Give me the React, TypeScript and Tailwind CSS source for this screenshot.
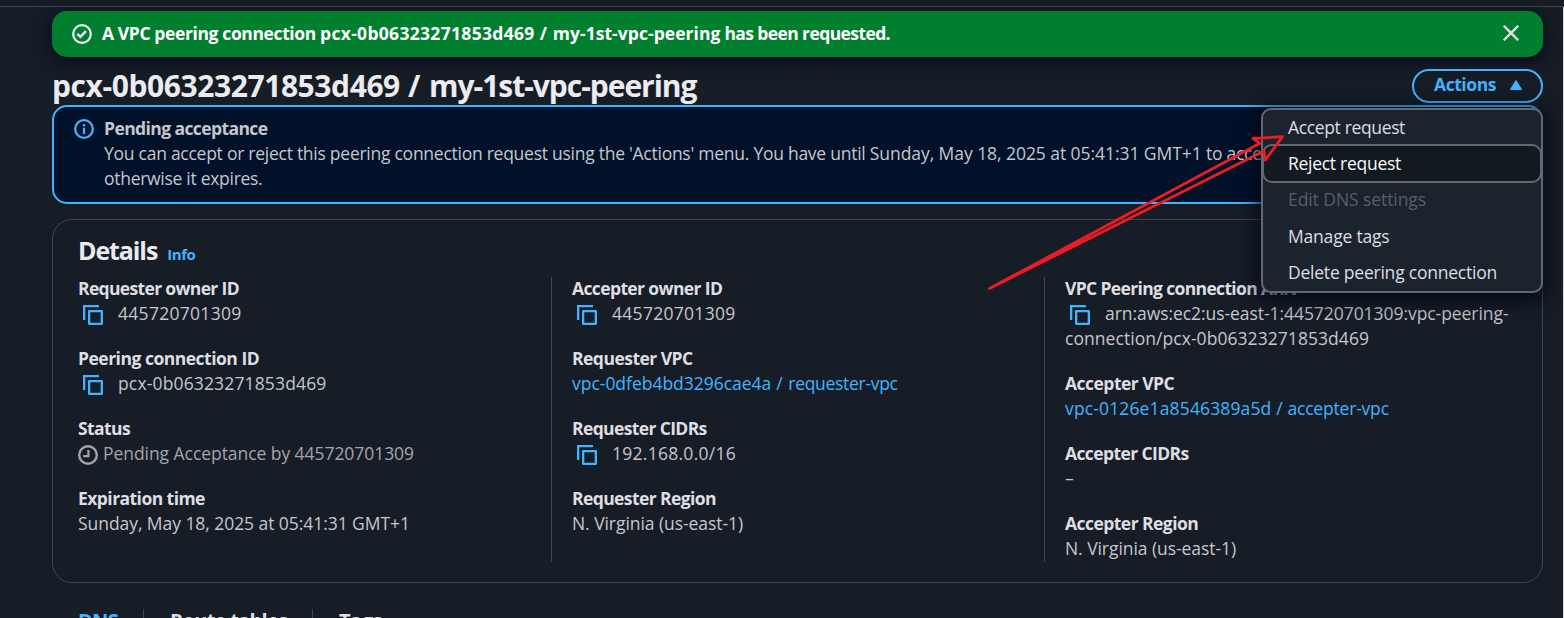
import type { ReactNode } from "react";

function CopyButton() {
  return (
    <span className="ml-[5px] mr-[15px] inline-flex h-5 w-5 align-[-5px]">
      <svg viewBox="0 0 20 20" className="h-5 w-5" fill="none" stroke="#42b4ff" strokeWidth="2.3">
        <path d="M16 1.15H1.15V15" />
        <rect x="6.15" y="6.15" width="12.7" height="12.7" strokeLinejoin="round" />
      </svg>
    </span>
  );
}

function CheckCircle() {
  return (
    <svg viewBox="0 0 20 20" className="h-5 w-5 shrink-0" fill="none" stroke="#f3f3f7" strokeWidth="2.2">
      <circle cx="10" cy="10" r="8.8" />
      <path d="M5.4 9.9 8.4 12.9 13.9 7.2" strokeWidth="2.4" />
    </svg>
  );
}

function InfoCircle() {
  return (
    <svg viewBox="0 0 20 20" className="h-5 w-5 shrink-0" fill="none" stroke="#42b4ff" strokeWidth="2.3">
      <circle cx="10" cy="10" r="8.8" />
      <path d="M10 5v2.4M10 8.7v6.2" />
    </svg>
  );
}

function PendingClock() {
  return (
    <svg viewBox="0 0 20 20" className="mt-0.5 h-5 w-5 shrink-0" fill="none" stroke="#a4a4ad" strokeWidth="2.4">
      <circle cx="10" cy="10" r="8.8" />
      <path d="M10.4 5v6.1H5.2" strokeWidth="2.2" />
    </svg>
  );
}

function Field({ label, track, children }: { label: ReactNode; track: string; children: ReactNode }) {
  return (
    <div>
      <div className={`whitespace-nowrap font-bold text-[#dedee3] ${track}`}>{label}</div>
      <div className="whitespace-nowrap">{children}</div>
    </div>
  );
}

function DividedColumn({ children }: { children: ReactNode }) {
  return (
    <div className="-ml-5 border-l border-[#424650] pl-5">
      <div className="-mt-px flex flex-col gap-5">{children}</div>
    </div>
  );
}

function MenuItem({ children, className }: { children: ReactNode; className: string }) {
  return <div className={`flex items-center whitespace-nowrap pb-px pl-[25px] ${className}`}>{children}</div>;
}

export default function App() {
  return (
    <div className="relative h-[618px] w-[1564px] overflow-hidden bg-[#161d26] font-['Open_Sans',sans-serif] text-[17.5px] leading-[25px] text-[#c6c6cd]">
      <div className="h-[7px] border-b border-[#424650]" />
      <main className="h-[611px] border-r border-[#dedee3] pl-[52px] pr-5 pt-1">
        <div className="flex h-[46px] items-center rounded-[15px] bg-[#00802f] pl-5 pr-6 font-bold text-white shadow-[0_4px_16px_2px_rgba(0,7,22,0.6)]">
          <CheckCircle />
          <p className="ml-[10px] grow whitespace-nowrap pb-px">
            <span className="tracking-[-0.385px]">A VPC peering connection </span>
            <span className="tracking-[0.31px]">pcx-0b06323271853d469</span>
            <span className="tracking-[0.6px]"> / </span>
            <span className="tracking-[0.05px]">my-1st-vpc-peering</span>
            <span className="tracking-[-0.6px]"> has been requested.</span>
          </p>
          <svg viewBox="0 0 16 16" className="mb-0.5 h-4 w-4" stroke="#dedee3" strokeWidth="2.4">
            <path d="M.8.8 15.2 15.2M15.2.8.8 15.2" />
          </svg>
        </div>

        <header className="relative z-10 flex h-12 items-start justify-between pt-3">
          <h1 className="whitespace-nowrap text-[30px] font-bold leading-[34px] text-[#ebebf0]">
            <span className="tracking-[-0.42px]">pcx-0b06323271853d469</span>
            <span className="tracking-[0.4px]"> / </span>
            <span className="tracking-[-1.03px]">my-1st-vpc-peering</span>
          </h1>
          <button className="flex h-[34px] w-[131px] items-center rounded-full border-2 border-[#42b4ff] pb-[3px] pl-5 font-bold leading-[27px] tracking-[-0.435px] text-[#42b4ff]">
            Actions
            <svg viewBox="0 0 14 12" className="ml-[13px] h-3 w-3.5" fill="#42b4ff" stroke="#42b4ff" strokeLinejoin="round">
              <path d="M7 1.5 12.6 10.5H1.4Z" />
            </svg>
          </button>
          <div className="absolute right-0 top-[51px] h-[185px] w-[282px] rounded-[10px] border-2 border-[#656871] bg-[#1b232d] text-[#dedee3] shadow-[0_4px_20px_3px_rgba(0,7,22,0.9)]">
            <MenuItem className="h-[35px] tracking-[-0.355px]">Accept request</MenuItem>
            <div className="-mx-px -mt-px flex h-[39px] items-center whitespace-nowrap rounded-[10px] border-2 border-[#656871] bg-[#131920] pb-px pl-6 tracking-[-0.276px] text-[#f9f9fa]">
              Reject request
            </div>
            <MenuItem className="-mt-px h-[36.5px] tracking-[-0.075px] text-[#5b5e68]">Edit DNS settings</MenuItem>
            <MenuItem className="h-[36.5px] tracking-[-0.191px]">Manage tags</MenuItem>
            <MenuItem className="h-[36.5px] tracking-[-0.224px]">Delete peering connection</MenuItem>
          </div>
        </header>

        <section className="flex h-[99px] rounded-[15px] border-2 border-[#42b4ff] bg-[#001129] pl-5 pt-[9px]">
          <div className="pt-[3px]">
            <InfoCircle />
          </div>
          <div className="ml-[10px] whitespace-nowrap">
            <div className="font-bold tracking-[-0.592px]">Pending acceptance</div>
            <div className="tracking-[-0.26px]">
              You can accept or reject this peering connection request using the 'Actions' menu. You have until{" "}
              <span className="tracking-[-0.06px]">Sunday, May 18, 2025 at 05:41:31 GMT+1</span> to accept it,
            </div>
            <div className="tracking-[-0.285px]">otherwise it expires.</div>
          </div>
        </section>

        <section className="mt-[15px] h-[364px] rounded-[20px] border border-[#424650] px-[25px] pt-3">
          <div className="flex items-baseline whitespace-nowrap">
            <h2 className="text-[25px] font-bold leading-[36px] tracking-[-1.1px] text-[#ebebf0]">Details</h2>
            <a className="ml-[10px] text-[15px] font-bold tracking-[-0.45px] text-[#42b4ff]">Info</a>
          </div>
          <div className="mt-[9px] grid h-[285px] grid-cols-3 gap-x-10">
            <div className="-mt-px flex flex-col gap-5">
              <Field label="Requester owner ID" track="tracking-[-0.66px]">
                <CopyButton />
                <span className="tracking-[0.286px]">445720701309</span>
              </Field>
              <Field label="Peering connection ID" track="tracking-[-0.5px]">
                <CopyButton />
                <span className="tracking-[0.148px]">pcx-0b06323271853d469</span>
              </Field>
              <Field label="Status" track="tracking-[-0.6px]">
                <span className="flex items-center gap-[5px] tracking-[-0.056px] text-[#a4a4ad]">
                  <PendingClock />
                  Pending Acceptance by 445720701309
                </span>
              </Field>
              <Field label="Expiration time" track="tracking-[-0.55px]">
                <span className="tracking-[-0.06px]">Sunday, May 18, 2025 at 05:41:31 GMT+1</span>
              </Field>
            </div>
            <DividedColumn>
              <Field label="Accepter owner ID" track="tracking-[-0.62px]">
                <CopyButton />
                <span className="tracking-[0.286px]">445720701309</span>
              </Field>
              <Field label="Requester VPC" track="tracking-[-0.52px]">
                <a className="text-[#42b4ff]">
                  <span className="tracking-[-0.02px]">vpc-0dfeb4bd3296cae4a</span>
                  <span className="tracking-[0.5px]"> / </span>
                  <span className="tracking-[-0.3px]">requester-vpc</span>
                </a>
              </Field>
              <Field label="Requester CIDRs" track="tracking-[-0.63px]">
                <CopyButton />
                <span className="tracking-[0.266px]">192.168.0.0/16</span>
              </Field>
              <Field label="Requester Region" track="tracking-[-0.6px]">
                <span className="tracking-[-0.063px]">N. Virginia (us-east-1)</span>
              </Field>
            </DividedColumn>
            <DividedColumn>
              <Field label="VPC Peering connection ARN" track="tracking-[-0.65px]">
                <CopyButton />
                <span className="tracking-[-0.058px]">arn:aws:ec2:us-east-1:445720701309:vpc-peering-</span>
                <br />
                <span className="tracking-[0.053px]">connection/pcx-0b06323271853d469</span>
              </Field>
              <Field label="Accepter VPC" track="tracking-[-0.52px]">
                <a className="text-[#42b4ff]">
                  <span className="tracking-[0.14px]">vpc-0126e1a8546389a5d / </span>
                  <span className="tracking-[-0.19px]">accepter-vpc</span>
                </a>
              </Field>
              <Field label="Accepter CIDRs" track="tracking-[-0.6px]">
                –
              </Field>
              <Field label="Accepter Region" track="tracking-[-0.54px]">
                <span className="tracking-[-0.063px]">N. Virginia (us-east-1)</span>
              </Field>
            </DividedColumn>
          </div>
        </section>

        <nav className="mt-[26px] flex whitespace-nowrap pl-[26px] text-[20px] font-bold leading-[23px] text-[#dedee3]">
          <span className="w-[65px] tracking-[-0.68px] text-[#42b4ff]">DNS</span>
          <span className="w-[169px] border-l border-[#424650] pl-[26px] tracking-[-0.7px]">Route tables</span>
          <span className="border-l border-[#424650] pl-[26px] tracking-[-0.5px]">Tags</span>
        </nav>
      </main>

      <svg viewBox="0 0 300 160" className="pointer-events-none absolute left-[986px] top-[132px] z-20 h-[160px] w-[300px]" fill="none" stroke="#ed1c24" strokeWidth="2.8" strokeLinejoin="round">
        <path d="M3.5 156.5 274 11.3 267 6.5 296.5 4.7 279.3 28 278 19Z" />
      </svg>
    </div>
  );
}
